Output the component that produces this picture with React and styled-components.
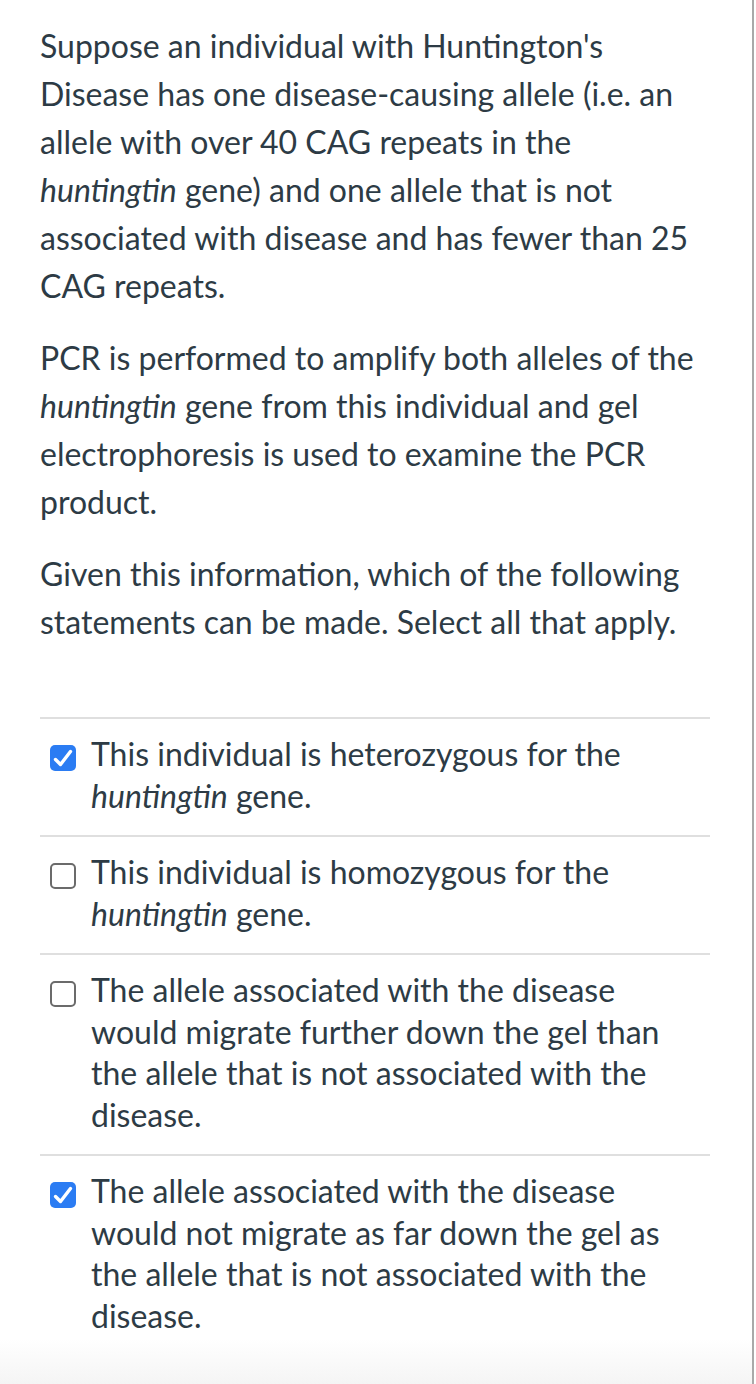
import React from "react";
import styled, { createGlobalStyle } from "styled-components";

const GlobalStyle = createGlobalStyle`
  html, body {
    margin: 0;
    padding: 0;
    background: #ffffff;
  }
  * {
    box-sizing: border-box;
  }
`;

const Page = styled.div`
  width: 754px;
  min-height: 1384px;
  border-right: 2px solid #a9a9a9;
  padding: 22px 42px 40px 40px;
  font-family: Lato, "Open Sans", sans-serif;
  color: #2d3b45;
  background: linear-gradient(
    to bottom,
    #ffffff calc(100% - 56px),
    #f2f2f2 100%
  );
`;

const Question = styled.p`
  margin: 0 0 24px;
  font-size: 32px;
  line-height: 48px;
`;

const AnswerList = styled.div`
  margin-top: 71px;
  display: flex;
  flex-direction: column;
`;

const Answer = styled.label`
  display: flex;
  align-items: flex-start;
  gap: 15px;
  padding: 14px 30px 19px 10px;
  border-top: 2px solid #dfdfdf;
  font-size: 32px;
  line-height: 41.5px;
  cursor: pointer;
`;

const Box = styled.span`
  flex: none;
  display: block;
  width: 26px;
  height: 26px;
  margin-top: 12px;
  border-radius: 5px;
  background: ${(p) => (p.checked ? "#2b7cf3" : "#ffffff")};
  border: ${(p) => (p.checked ? "none" : "2px solid #6b6b6b")};

  svg {
    display: block;
  }
`;

const AnswerText = styled.span`
  flex: 1;
`;

function Check({ checked }) {
  return (
    <Box checked={checked}>
      {checked && (
        <svg width="26" height="26" viewBox="0 0 26 26">
          <path
            d="M5.5 14.5 L10.5 19.5 L20.5 6.5"
            fill="none"
            stroke="#ffffff"
            strokeWidth="3.4"
            strokeLinecap="round"
            strokeLinejoin="round"
          />
        </svg>
      )}
    </Box>
  );
}

const answers = [
  {
    checked: true,
    text: (
      <>
        This individual is heterozygous for the <em>huntingtin</em> gene.
      </>
    ),
  },
  {
    checked: false,
    text: (
      <>
        This individual is homozygous for the <em>huntingtin</em> gene.
      </>
    ),
  },
  {
    checked: false,
    text: "The allele associated with the disease would migrate further down the gel than the allele that is not associated with the disease.",
  },
  {
    checked: true,
    text: "The allele associated with the disease would not migrate as far down the gel as the allele that is not associated with the disease.",
  },
];

export default function App() {
  return (
    <>
      <GlobalStyle />
      <Page>
        <Question>
          Suppose an individual with Huntington's Disease has one
          disease-causing allele (i.e. an allele with over 40 CAG repeats in
          the <em>huntingtin</em> gene) and one allele that is not associated
          with disease and has fewer than 25 CAG repeats.
        </Question>
        <Question>
          PCR is performed to amplify both alleles of the <em>huntingtin</em>{" "}
          gene from this individual and gel electrophoresis is used to examine
          the PCR product.
        </Question>
        <Question>
          Given this information, which of the following statements can be
          made. Select all that apply.
        </Question>
        <AnswerList>
          {answers.map((a, i) => (
            <Answer key={i}>
              <Check checked={a.checked} />
              <AnswerText>{a.text}</AnswerText>
            </Answer>
          ))}
        </AnswerList>
      </Page>
    </>
  );
}
